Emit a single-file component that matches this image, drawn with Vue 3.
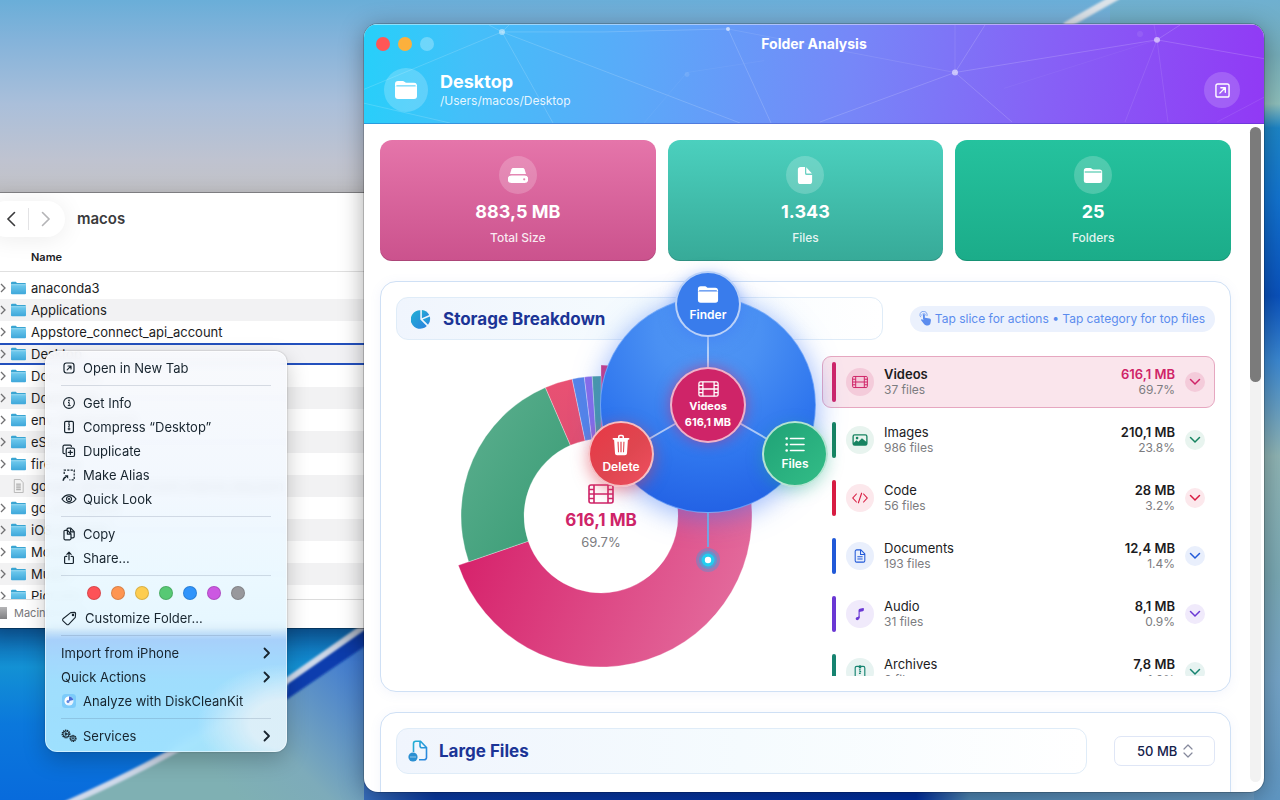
<script setup>
import { ref } from 'vue'

const folders = [
  { name: 'anaconda3' },
  { name: 'Applications' },
  { name: 'Appstore_connect_api_account' },
  { name: 'Desktop', selected: true },
  { name: 'Documents' },
  { name: 'Downloads' },
  { name: 'env_development' },
  { name: 'eSignatures' },
  { name: 'firebase' },
  { name: 'google_service_account_macos_key.json', file: true },
  { name: 'go_workspace' },
  { name: 'iOS_projects' },
  { name: 'Movies' },
  { name: 'Music' },
  { name: 'Pictures' },
]

const menuGroups = [
  [{ icon: 'tab', label: 'Open in New Tab' }],
  [
    { icon: 'info', label: 'Get Info' },
    { icon: 'zip', label: 'Compress “Desktop”' },
    { icon: 'duplicate', label: 'Duplicate' },
    { icon: 'alias', label: 'Make Alias' },
    { icon: 'eye', label: 'Quick Look' },
  ],
  [
    { icon: 'copy', label: 'Copy' },
    { icon: 'share', label: 'Share...' },
  ],
]
const tags = [
  { name: 'Red', cls: 'red' },
  { name: 'Orange', cls: 'orange' },
  { name: 'Yellow', cls: 'yellow' },
  { name: 'Green', cls: 'green' },
  { name: 'Blue', cls: 'blue' },
  { name: 'Purple', cls: 'purple' },
  { name: 'Gray', cls: 'gray' },
]

const stats = [
  { icon: 'drive', value: '883,5 MB', label: 'Total Size', cls: 'pink' },
  { icon: 'file', value: '1.343', label: 'Files', cls: 'teal' },
  { icon: 'folder', value: '25', label: 'Folders', cls: 'emerald' },
]

const categories = [
  { name: 'Videos', icon: 'film', files: '37 files', size: '616,1 MB', share: 69.7, cls: 'c-videos' },
  { name: 'Images', icon: 'image', files: '986 files', size: '210,1 MB', share: 23.8, cls: 'c-images' },
  { name: 'Code', icon: 'code', files: '56 files', size: '28 MB', share: 3.2, cls: 'c-code' },
  { name: 'Documents', icon: 'doc', files: '193 files', size: '12,4 MB', share: 1.4, cls: 'c-docs' },
  { name: 'Audio', icon: 'note', files: '31 files', size: '8,1 MB', share: 0.9, cls: 'c-audio' },
  { name: 'Archives', icon: 'archive', files: '6 files', size: '7,8 MB', share: 1.0, cls: 'c-archives' },
]
const active = ref('Videos')
const threshold = ref('50')

function slicePath(from, to, outer, inner) {
  const p = (pct, r) => {
    const a = (pct / 100) * Math.PI * 2
    return `${(160 + r * Math.sin(a)).toFixed(2)} ${(160 - r * Math.cos(a)).toFixed(2)}`
  }
  const large = to - from > 50 ? 1 : 0
  return `M${p(from, outer)}A${outer} ${outer} 0 ${large} 1 ${p(to, outer)}L${p(to, inner)}A${inner} ${inner} 0 ${large} 0 ${p(from, inner)}Z`
}
let start = 0
const slices = categories.map((c) => {
  const from = start
  start += c.share
  return { name: c.name, fill: `url(#g-${c.cls})`, d: slicePath(from, start, c.name === 'Videos' ? 151 : 140, 77) }
})
</script>

<template>
  <svg class="defs" aria-hidden="true">
    <symbol id="i-tab" viewBox="0 0 16 16"><g fill="none" stroke="currentColor" stroke-width="1.2" stroke-linecap="round" stroke-linejoin="round"><rect x="3" y="3" width="10" height="10" rx="2.4" /><path d="M6.2 9.8l3.600-3.600M7 6h3v3" /></g></symbol>
    <symbol id="i-open" viewBox="0 0 16 16"><g fill="none" stroke="currentColor" stroke-width="1.5" stroke-linecap="round" stroke-linejoin="round"><rect x="1" y="1" width="14" height="14" rx="2" /><path d="M5.2 10.8l5.4-5.4M6.2 5h4.8v4.8" /></g></symbol>
    <symbol id="i-info" viewBox="0 0 16 16"><circle cx="8" cy="8" r="5.4" fill="none" stroke="currentColor" stroke-width="1.1" /><circle cx="8" cy="5.5" r=".9" fill="currentColor" /><path d="M7 7.500h1.200v3M6.800 10.600h2.800" fill="none" stroke="currentColor" /></symbol>
    <symbol id="i-zip" viewBox="0 0 16 16"><g fill="none" stroke="currentColor" stroke-width="1.2"><rect x="3.6" y="2.4" width="8.8" height="11.2" rx="1.4" /><path d="M8 2.4v1.600M7.200 4.800h1.400M7.600 6.200h1.400M7.200 7.600h1.400" /><path d="M7.300 9h1.400v1.800H7.300z" stroke-width=".9" /></g></symbol>
    <symbol id="i-duplicate" viewBox="0 0 16 16"><g fill="none" stroke="currentColor" stroke-width="1.2" stroke-linecap="round"><rect x="5.2" y="5.2" width="8.3" height="8.3" rx="1.6" /><path d="M3.600 10.600H3.200a1.200 1.200 0 0 1-1.200-1.200V3.600a1.400 1.400 0 0 1 1.400-1.400h5.800a1.200 1.200 0 0 1 1.200 1.200M9.350 7.400v4M7.350 9.400h4" /></g></symbol>
    <symbol id="i-alias" viewBox="0 0 16 16"><g fill="none" stroke="currentColor" stroke-width="1.2"><path d="M3.200 7V3.200h10v9.600H8.400" stroke-dasharray="2.2 1.2" /><path d="M2.200 13.800c.2-2.200 1-3.400 2.800-3.800" stroke-width="1.5" /></g><path d="M3.600 8.200h3.600v3.600z" fill="currentColor" /></symbol>
    <symbol id="i-eye" viewBox="0 0 16 16"><path d="M1 8c2-2.800 4.300-4.100 7-4.100S13 5.200 15 8c-2 2.800-4.300 4.100-7 4.100S3 10.800 1 8z" fill="none" stroke="currentColor" stroke-width="1.2" /><circle cx="8" cy="8" r="2.5" fill="none" stroke="currentColor" stroke-width="1.2" /><circle cx="8" cy="8" r="1.1" fill="currentColor" /></symbol>
    <symbol id="i-copy" viewBox="0 0 16 16"><g fill="none" stroke="currentColor" stroke-width="1.2" stroke-linejoin="round"><path d="M6 4.300V3.400a1.200 1.200 0 0 1 1.200-1.200h2.600l3.400 3.400v5a1.200 1.200 0 0 1-1.200 1.200H10" /><path d="M3 5.500a1.200 1.200 0 0 1 1.200-1.200h2.300L10 8v4.600a1.200 1.200 0 0 1-1.200 1.200H4.200A1.200 1.200 0 0 1 3 12.600zM6.400 4.500V8.200H10M9.600 2.400v3.400h3.400" /></g></symbol>
    <symbol id="i-share" viewBox="0 0 16 16"><g fill="none" stroke="currentColor" stroke-width="1.2" stroke-linecap="round" stroke-linejoin="round"><path d="M5.800 6.300H4.600a1 1 0 0 0-1 1v5.200a1 1 0 0 0 1 1h6.800a1 1 0 0 0 1-1V7.300a1 1 0 0 0-1-1h-1.200M8 9.800V2.400M5.900 4.300L8 2.200l2.100 2.100" /></g></symbol>
    <symbol id="i-tag" viewBox="0 0 16 16"><g fill="none" stroke="currentColor" stroke-width="1.1" stroke-linejoin="round"><path d="M9.700 2.600l3.900-.2a1 1 0 0 1 1 1l-.3 3.900-6.600 7a1.400 1.400 0 0 1-2 0L2 10.800a1.400 1.400 0 0 1 0-2z" /><circle cx="12" cy="5" r=".7" /></g></symbol>
    <symbol id="i-gears" viewBox="0 0 16 16"><g fill="none" stroke="currentColor"><circle cx="5" cy="6" r="3.700" stroke-width="1.5" stroke-dasharray="1.3 .7" /><circle cx="5" cy="6" r="3" stroke-width=".8" /><circle cx="5" cy="6" r="1" /><path d="M5 6l-1.500-2.500M5 6l-1.500 2.500M5 6h3" stroke-width=".8" /><circle cx="12" cy="10.4" r="2.9" stroke-width="1.4" stroke-dasharray="1.1 .6" /><circle cx="12" cy="10.4" r="2.3" stroke-width=".8" /><circle cx="12" cy="10.4" r=".8" /></g></symbol>
    <symbol id="i-folder" viewBox="0 0 24 20"><path d="M1 4a3 3 0 0 1 3-3h4.200c1.200 0 1.800.4 2.500 1 .5.500 1 .7 1.800.7H20a3 3 0 0 1 3 2.300H1z" fill="currentColor" /><path d="M1 6.600h22V16a3 3 0 0 1-3 3H4a3 3 0 0 1-3-3z" fill="currentColor" /><path d="M1 5h1.600v1.700H1zM21.400 5H23v1.700h-1.600z" fill="currentColor" /><path d="M3 5h18v1.600H3z" fill="currentColor" opacity=".3" /></symbol>
    <symbol id="i-drive" viewBox="0 0 20 16"><path d="M5.500.5h9c1 0 1.700.5 2 1.300L18 6.500H2l1.500-4.700C3.800 1 4.500.5 5.500.5z" fill="currentColor" /><path fill-rule="evenodd" d="M3.500 8h13a3.500 3.500 0 0 1 0 7.500h-13a3.500 3.500 0 0 1 0-7.500zm12.700 2.700a1.100 1.100 0 1 0 0 2.200 1.100 1.100 0 0 0 0-2.200z" fill="currentColor" /></symbol>
    <symbol id="i-file" viewBox="0 0 16 20"><path d="M3.500 1H8v6.500a2 2 0 0 0 2 2h5.500V16a3 3 0 0 1-3 3h-9a3 3 0 0 1-3-3V4a3 3 0 0 1 3-3z" fill="currentColor" /><path d="M9.300 1.200L15.300 8H10.300a1 1 0 0 1-1-1z" fill="currentColor" /></symbol>
    <symbol id="i-film" viewBox="0 0 26 20"><g fill="none" stroke="currentColor" stroke-width="1.6"><rect x="1" y="1" width="24" height="18" rx="2" /><path d="M6 1v18M20 1v18M6 10h14M1 5.500h5M1 10h5M1 14.500h5M20 5.500h5M20 10h5M20 14.500h5" /></g></symbol>
    <symbol id="i-image" viewBox="0 0 18 14"><path fill-rule="evenodd" d="M3 .5h12A2.500 2.500 0 0 1 17.500 3v8a2.500 2.500 0 0 1-2.500 2.500H3A2.500 2.500 0 0 1 .5 11V3A2.500 2.500 0 0 1 3 .5zM3 2a1 1 0 0 0-1 1v7l3-2.800 2.200 1.800 4-4L16 9V3a1 1 0 0 0-1-1zm2.700 1.300a1.500 1.500 0 1 1 0 3 1.500 1.500 0 0 1 0-3z" fill="currentColor" /></symbol>
    <symbol id="i-code" viewBox="0 0 20 14"><path d="M5.500 2L1 7l4.500 5M14.500 2L19 7l-4.500 5M12 1L8 13" fill="none" stroke="currentColor" stroke-width="1.400" stroke-linecap="round" /></symbol>
    <symbol id="i-doc" viewBox="0 0 14 16"><g fill="none" stroke="currentColor" stroke-width="1.2" stroke-linejoin="round"><path d="M1.500 2.700A1.700 1.700 0 0 1 3.200 1H8l4.500 4.700v7.600a1.700 1.700 0 0 1-1.700 1.700H3.200a1.700 1.700 0 0 1-1.700-1.700zM7.600 1v5.200h4.900M4 8.800h6M4 11.500h6" /></g></symbol>
    <symbol id="i-note" viewBox="0 0 14 16"><path d="M6 4v8.200" stroke="currentColor" stroke-width="1.300" /><path d="M5.400 3.600c0-1 .5-1.500 1.400-1.700l3.700-.8c.6-.1.900.2.900.7v1.600c0 .8-.4 1.200-1.200 1.400l-4.200.9z" fill="currentColor" /><path d="M6.600 11.500c0 2.200-1.100 3.500-2.700 3.500-1.100 0-1.800-.7-1.800-1.600 0-1.200.9-1.700 2-1.900 1.100-.2 1.300-.4 1.300-1.300z" fill="currentColor" /></symbol>
    <symbol id="i-archive" viewBox="0 0 14 16"><g fill="none" stroke="currentColor" stroke-width="1.3"><rect x="1.500" y="1.500" width="11" height="13.500" rx="1.8" /><path d="M7 0v4M5.600 3h2.800M5.800 5.500h2M6.300 7.500h2M5.800 9.500h2" /></g></symbol>
    <symbol id="i-trash" viewBox="0 0 18 22"><path fill-rule="evenodd" d="M6 2.800C6 1.500 6.800.8 8 .8h2c1.200 0 2 .7 2 2V4h4.500c.6 0 .9.300.9.800s-.3.900-.9.900h-.6L15 19.300c-.1 1.200-.9 1.900-2.100 1.900H5.100c-1.200 0-2-.7-2.100-1.900L2.100 5.700h-.6c-.6 0-.9-.4-.9-.9S.9 4 1.500 4H6zm1.500 0V4h3V2.800c0-.4-.2-.6-.6-.6H8.100c-.4 0-.6.2-.6.600zM5.500 7.800l.5 10.500h1L6.600 7.800zM8.400 7.800v10.500h1.200V7.800zm3 0L11 18.300h1l.5-10.500z" fill="currentColor" /></symbol>
    <symbol id="i-list" viewBox="0 0 20 16"><g fill="currentColor"><circle cx="1.700" cy="2" r="1.300" /><circle cx="1.700" cy="8" r="1.300" /><circle cx="1.700" cy="14" r="1.300" /></g><path d="M5.500 2h13.500M5.500 8h13.500M5.500 14h13.500" stroke="currentColor" stroke-width="1.600" stroke-linecap="round" /></symbol>
    <symbol id="i-tap" viewBox="0 0 14 16"><path d="M4.300 8V4.200a1 1 0 0 1 2 0v3l5 .9c1.200.3 1.700 1 1.500 2.200l-.5 2.900c-.3 1.500-1.200 2.300-2.800 2.300H8c-1 0-1.800-.4-2.400-1.200L2.300 10c-.4-.7.3-1.600 1.100-1.100l1.400 1z" fill="currentColor" /><path d="M1.900 6.600a3.900 3.900 0 1 1 6.700-1.200" fill="none" stroke="currentColor" stroke-width=".8" /><path d="M3.200 5.500a2.200 2.200 0 1 1 4.200-.6" fill="none" stroke="currentColor" stroke-width=".6" /></symbol>
    <linearGradient id="g-accent" x1="0" y1="0" x2="1" y2="1"><stop offset="0" stop-color="#22b0d4" /><stop offset="1" stop-color="#2a82de" /></linearGradient>
    <linearGradient id="g-folder" x1="0" y1="0" x2="0" y2="1"><stop offset="0" stop-color="#71cbee" /><stop offset="1" stop-color="#3ea7da" /></linearGradient>
  </svg>

  <main class="desktop">
    <svg class="wallpaper" viewBox="0 0 1280 800" preserveAspectRatio="none" aria-hidden="true">
      <defs>
        <linearGradient id="sky" x1="0" y1="0" x2="0" y2="1">
          <stop offset="0" stop-color="#6aaed8" /><stop offset=".05" stop-color="#84b3da" /><stop offset=".13" stop-color="#aabfda" /><stop offset=".2" stop-color="#bfc3d0" /><stop offset=".25" stop-color="#c3c2c4" />
        </linearGradient>
        <linearGradient id="deep" x1="0" y1="0" x2="0" y2="1">
          <stop offset="0" stop-color="#0b4f9e" /><stop offset=".3" stop-color="#1391d4" /><stop offset=".6" stop-color="#0b78dc" /><stop offset="1" stop-color="#086bdc" />
        </linearGradient>
        <linearGradient id="sand" gradientUnits="userSpaceOnUse" x1="240" y1="800" x2="370" y2="670">
          <stop offset="0" stop-color="#7fb0b3" /><stop offset=".35" stop-color="#7dabba" /><stop offset="1" stop-color="#3f7ad2" />
        </linearGradient>
        <linearGradient id="side" x1="0" y1="0" x2="0" y2="1">
          <stop offset="0" stop-color="#6fb0d0" /><stop offset=".07" stop-color="#76adb9" /><stop offset=".13" stop-color="#8fc0bc" /><stop offset=".16" stop-color="#1d86c8" /><stop offset=".25" stop-color="#1273d0" /><stop offset=".37" stop-color="#0a52bd" /><stop offset=".45" stop-color="#3b88d2" /><stop offset=".57" stop-color="#90b5b5" /><stop offset=".72" stop-color="#7aa9b4" /><stop offset=".85" stop-color="#75a5c8" /><stop offset="1" stop-color="#5f96c2" />
        </linearGradient>
        <linearGradient id="foot" x1="0" y1="0" x2="1" y2="0">
          <stop offset="0" stop-color="#386ebd" /><stop offset=".08" stop-color="#0a3ba6" /><stop offset=".62" stop-color="#002fa3" /><stop offset=".68" stop-color="#5089b7" /><stop offset="1" stop-color="#6c9dc5" />
        </linearGradient>
        <filter id="soft"><feGaussianBlur stdDeviation="1" /></filter>
      </defs>
      <rect width="1280" height="800" fill="url(#sky)" />
      <rect y="610" width="400" height="190" fill="url(#deep)" />
      <path d="M400 604L288 680Q200 744 60 806H400z" fill="url(#sand)" />
      <path d="M374 622L288 682 286 700 374 640z" fill="#0a3cae" filter="url(#soft)" />
      <path d="M372 621L288 680Q200 744 66 804" fill="none" stroke="#cfd9ea" stroke-width="6" filter="url(#soft)" />
      <rect x="1110" width="170" height="800" fill="url(#side)" />
      <path d="M1065 26L1118-4" stroke="#dde4ea" stroke-width="7" filter="url(#soft)" />
      <rect x="364" y="780" width="890" height="20" fill="url(#foot)" />
    </svg>

    <section class="finder" aria-label="Finder">
      <header class="finder-bar">
        <nav class="nav-pill">
          <button aria-label="Back"><svg viewBox="0 0 10 16"><path d="M8.500 1.500L2 8l6.500 6.500" /></svg></button>
          <i></i>
          <button class="dim" aria-label="Forward"><svg viewBox="0 0 10 16"><path d="M1.500 1.500L8 8l-6.500 6.500" /></svg></button>
        </nav>
        <h2>macos</h2>
      </header>
      <div class="finder-col">Name</div>
      <ul class="finder-list">
        <li v-for="f in folders" :key="f.name" :class="{ selected: f.selected }">
          <svg v-if="!f.file" class="disclose" viewBox="0 0 6 10"><path d="M1 1l4 4-4 4" /></svg>
          <span v-else class="disclose"></span>
          <svg v-if="!f.file" class="folder-icon" viewBox="0 0 15 13"><path d="M0 1.500Q0 .3 1.200.3h3.600l1.200 1.100h7.800q1.200 0 1.200 1V6H0z" fill="#3aa5d2" /><path d="M0 3h15v8.700q0 1-1 1H1q-1 0-1-1z" fill="url(#g-folder)" /><path d="M0 3.200h15" stroke="#b4e6f8" stroke-width=".7" /></svg>
          <svg v-else class="folder-icon" viewBox="0 0 15 15"><path d="M3 .5h6.500L12.500 4v10.500H3z" fill="#f3f3f3" stroke="#b5b5b5" /><path d="M5 5.500h5M5 7.500h5M5 9.500h5M5 11.500h5" stroke="#999" /></svg>
          <span>{{ f.name }}</span>
        </li>
      </ul>
      <footer class="finder-foot"><i></i>Macintosh HD</footer>
    </section>

    <section class="app" aria-label="Folder Analysis">
      <header class="app-head">
        <svg class="mesh" viewBox="0 0 900 99" preserveAspectRatio="none" aria-hidden="true">
          <g fill="none" stroke="#fff" stroke-width="1" opacity=".16">
            <path d="M0 65L138 7 189 99M138 7L376 99M138 7H240L364 4M364 4L407 99M0 79L86 99M125 0L138 7 145 0" />
            <path d="M456 98L591 48 648 98M591 48L621 0M591 48L793 15 900 34M793 15L816 0" />
            <path d="M591 48V0M591 48L364 4M793 15L761 98M793 15L804 98M853 98L900 73M790 0L793 15" opacity=".6" />
            <path d="M280 99L323 48 400 36M640 64L793 15" opacity=".3" />
          </g>
          <g fill="#fff"><circle cx="138" cy="7" r="3" opacity=".45" /><circle cx="364" cy="4" r="2" opacity=".6" /><circle cx="591" cy="48" r="3" opacity=".55" /><circle cx="793" cy="15" r="3" opacity=".55" /><circle cx="323" cy="50" r="2.500" opacity=".1" /><circle cx="776" cy="9" r="3" opacity=".08" /></g>
        </svg>
        <div class="title-bar">
          <div class="lights"><button class="close" aria-label="Close"></button><button class="mini" aria-label="Minimize"></button><button class="zoom" aria-label="Zoom"></button></div>
          <h1>Folder Analysis</h1>
          <span></span>
        </div>
        <div class="folder-row">
          <span class="folder-badge"><svg width="24" height="20"><use href="#i-folder" /></svg></span>
          <div class="folder-text"><strong>Desktop</strong><span>/Users/macos/Desktop</span></div>
          <button class="open-btn" aria-label="Open in Finder"><svg width="15" height="15"><use href="#i-open" /></svg></button>
        </div>
      </header>

      <div class="app-body">
        <div class="content">
          <div class="stats">
            <article v-for="s in stats" :key="s.label" class="stat" :class="s.cls">
              <span class="stat-icon"><svg width="20" height="19"><use :href="'#i-' + s.icon" /></svg></span>
              <strong>{{ s.value }}</strong>
              <span class="stat-label">{{ s.label }}</span>
            </article>
          </div>

          <section class="panel">
            <div class="panel-head">
              <div class="head-box">
                <svg class="pie" viewBox="0 0 20 20" fill="url(#g-accent)"><path d="M9.300 1.200v9.200l6.500 6.500A9.300 9.300 0 1 1 9.300 1.200z" /><path d="M10.900.9a9.300 9.300 0 0 1 7.300 5l-7.300 3.300z" /><path d="M18.800 7.400a9.300 9.300 0 0 1-1.800 8.300l-5.300-5.200z" /></svg>
                <h2>Storage Breakdown</h2>
              </div>
              <p class="hint"><svg width="13" height="15"><use href="#i-tap" /></svg>Tap slice for actions • Tap category for top files</p>
            </div>
            <div class="split">
              <div class="chart">
                <svg class="donut" viewBox="0 0 320 320" role="img" aria-label="Storage by category">
                  <defs>
                    <linearGradient id="g-c-videos" gradientUnits="userSpaceOnUse" x1="30" y1="150" x2="290" y2="250"><stop offset="0" stop-color="#d6206a" /><stop offset="1" stop-color="#e3699b" /></linearGradient>
                    <linearGradient id="g-c-images" x1="0" y1="0" x2="1" y2="1"><stop offset="0" stop-color="#5eb090" /><stop offset="1" stop-color="#369a73" /></linearGradient>
                    <linearGradient id="g-c-code" x1="0" y1="0" x2="0" y2="1"><stop offset="0" stop-color="#e95173" /><stop offset="1" stop-color="#df4f72" /></linearGradient>
                    <linearGradient id="g-c-docs"><stop stop-color="#5584e8" /></linearGradient>
                    <linearGradient id="g-c-audio"><stop stop-color="#8a6ce8" /></linearGradient>
                    <linearGradient id="g-c-archives"><stop stop-color="#4b9ba0" /></linearGradient>
                  </defs>
                  <path v-for="s in slices" :key="s.name" :d="s.d" :fill="s.fill" stroke="#fff" stroke-opacity=".3" stroke-width="1" />
                </svg>
                <div class="donut-label">
                  <svg width="26" height="20"><use href="#i-film" /></svg>
                  <strong>616,1 MB</strong>
                  <span>69.7%</span>
                </div>
                <div class="radial">
                  <div class="disc"></div>
                  <svg class="spokes" viewBox="0 0 216 312" aria-hidden="true">
                    <path d="M108 108V8M108 108L21 158M108 108l87 50" stroke="#fff" stroke-opacity=".6" stroke-width="2" />
                    <path d="M108 216v34" stroke="#75a3e2" stroke-width="2" />
                    <circle cx="108" cy="263" r="12" fill="#25a3e8" opacity=".35" /><circle cx="108" cy="263" r="9" fill="#25b3e8" opacity=".5" /><circle cx="108" cy="263" r="6.500" fill="#22cdef" /><circle cx="108" cy="263" r="3.200" fill="#fff" />
                  </svg>
                  <button class="node hub"><svg width="21" height="16"><use href="#i-film" /></svg><b>Videos</b><b>616,1 MB</b></button>
                  <button class="node sat n-finder"><svg width="22" height="19"><use href="#i-folder" /></svg>Finder</button>
                  <button class="node sat n-delete"><svg width="18" height="22"><use href="#i-trash" /></svg>Delete</button>
                  <button class="node sat n-files"><svg width="20" height="17"><use href="#i-list" /></svg>Files</button>
                </div>
              </div>
              <ul class="cats">
                <li v-for="c in categories" :key="c.name" :class="[c.cls, { on: active === c.name }]">
                  <button class="cat" @click="active = c.name">
                    <i class="bar"></i>
                    <span class="cat-icon"><svg width="16" height="14"><use :href="'#i-' + c.icon" /></svg></span>
                    <span class="cat-text"><b>{{ c.name }}</b><small>{{ c.files }}</small></span>
                    <span class="cat-size"><b>{{ c.size }}</b><small>{{ c.share.toFixed(1) }}%</small></span>
                    <span class="chev"><svg viewBox="0 0 12 8"><path d="M1.500 1.500L6 6l4.500-4.500" /></svg></span>
                  </button>
                </li>
              </ul>
            </div>
          </section>

          <section class="panel second">
            <div class="panel-head">
              <div class="head-box tall">
                <svg class="big-file" viewBox="0 0 20 22"><path d="M5.500 12V3.500A2.300 2.300 0 0 1 7.800 1.200h4.700l6 6.300v10a2.300 2.300 0 0 1-2.300 2.300H11M12 1.200v4.600A2 2 0 0 0 14 7.800h4.500" fill="none" stroke="url(#g-accent)" stroke-width="1.6" /><circle cx="5" cy="17" r="4.6" fill="#2a8fd2" /><path d="M2.500 17h1M4.500 17h1M6.500 17h1" stroke="#fff" stroke-width="1.2" /></svg>
                <h2>Large Files</h2>
              </div>
              <div class="pick">
                <select v-model="threshold" aria-label="Minimum file size"><option value="50">50 MB</option></select>
                <svg viewBox="0 0 10 14"><path d="M1 5L5 1 9 5M1 9L5 13 9 9" /></svg>
              </div>
            </div>
          </section>
        </div>
        <div class="scroll"><i></i></div>
      </div>
    </section>

    <div class="menu" role="menu">
      <template v-for="(group, gi) in menuGroups" :key="gi">
        <button v-for="m in group" :key="m.label" role="menuitem"><svg width="16" height="16"><use :href="'#i-' + m.icon" /></svg>{{ m.label }}</button>
        <hr />
      </template>
      <div class="tags"><button v-for="t in tags" :key="t.name" :class="t.cls" :aria-label="t.name"></button></div>
      <button role="menuitem" class="wide"><svg width="16" height="16"><use href="#i-tag" /></svg>Customize Folder...</button>
      <hr />
      <button role="menuitem"><span class="grow">Import from iPhone</span><svg class="more" viewBox="0 0 8 12"><path d="M1.500 1.500L6 6l-4.500 4.500" /></svg></button>
      <button role="menuitem"><span class="grow">Quick Actions</span><svg class="more" viewBox="0 0 8 12"><path d="M1.500 1.500L6 6l-4.500 4.500" /></svg></button>
      <button role="menuitem"><svg width="16" height="16" viewBox="0 0 16 16"><rect x="1" y="1" width="14" height="14" rx="3.500" fill="#7ccbfa" /><circle cx="8" cy="8" r="4.500" fill="#e9f3ff" /><path d="M8 3.500a4.500 4.500 0 0 0-3 7.800L8 8z" fill="#fff" /><path d="M8 8V3.500A4.500 4.500 0 0 1 12.300 7z" fill="#4a6ed8" /><circle cx="7" cy="8.500" r="1.500" fill="#5f86e0" /></svg>Analyze with DiskCleanKit</button>
      <hr />
      <button role="menuitem"><svg width="16" height="16"><use href="#i-gears" /></svg><span class="grow">Services</span><svg class="more" viewBox="0 0 8 12"><path d="M1.500 1.500L6 6l-4.500 4.500" /></svg></button>
    </div>
  </main>
</template>

<style>
html, body { height: 100%; overflow: hidden; }
</style>

<style scoped>
.defs { position: absolute; width: 0; height: 0; }
.desktop { position: relative; height: 100vh; overflow: hidden; font-family: Inter, "Liberation Sans", sans-serif; font-size: 13px; color: #1c1c1e; }
.wallpaper { position: absolute; inset: 0; width: 100%; height: 100%; }
h1, h2, p, ul { margin: 0; padding: 0; }
ul { list-style: none; }
button { font: inherit; color: inherit; border: 0; background: none; padding: 0; margin: 0; }
svg { flex: none; }

.finder { position: absolute; left: -12px; top: 193px; width: 460px; height: 435px; background: #fff; display: flex; flex-direction: column; overflow: hidden; box-shadow: 0 0 0 1px rgba(0, 0, 0, .3), 0 8px 22px rgba(0, 0, 0, .3); }
.finder-bar { height: 51px; display: flex; align-items: center; gap: 12px; }
.finder-bar h2 { font-size: 15px; line-height: 20px; font-weight: 600; color: #3a3a3c; }
.nav-pill { display: flex; align-items: center; justify-content: flex-end; box-sizing: border-box; width: 77px; height: 36px; padding-right: 2px; border-radius: 18px; background: #fff; box-shadow: 0 2px 24px rgba(0, 0, 0, .08); }
.nav-pill button { width: 34px; height: 28px; display: flex; align-items: center; justify-content: center; }
.nav-pill svg { width: 10px; height: 16px; fill: none; stroke: #3a3a3c; stroke-width: 1.6; stroke-linecap: round; }
.nav-pill .dim svg { stroke: #b4b4b6; }
.nav-pill i { width: 1px; height: 22px; background: #e3e3e5; }
.finder-col { height: 27px; padding-left: 43px; font-size: 11px; line-height: 27px; font-weight: 600; border-bottom: 1px solid #e0e0e0; }
.finder-list { flex: 1; min-height: 0; padding-top: 5px; overflow: hidden; }
.finder-list li { height: 22px; display: flex; align-items: center; padding-left: 12px; white-space: nowrap; }
.finder-list li:nth-child(even) { background: #f2f2f3; }
.finder-list li.selected { box-shadow: inset 0 0 0 2px #2350bd; background: #f2f2f5; border-radius: 3px; }
.disclose { width: 6px; height: 10px; margin-right: 5px; fill: none; stroke: #707072; stroke-width: 1.3; }
.folder-icon { width: 15px; height: 14px; margin-right: 5px; }
.finder-foot { height: 25px; padding-bottom: 3px; border-top: 1px solid #dcdcdc; display: flex; align-items: center; gap: 7px; padding-left: 12px; font-size: 11px; color: #77777a; }
.finder-foot i { width: 7px; height: 12px; background: linear-gradient(#b5b5b7, #808082); }

.menu { position: absolute; left: 45px; top: 351px; width: 242px; padding: 5px 0 4px; box-sizing: border-box; border-radius: 12px; color: #17242e; background: radial-gradient(ellipse 90px 60px at 100% 93%, rgba(226, 240, 248, .9) 40%, rgba(226, 240, 248, 0)), linear-gradient(rgba(248, 249, 252, .93) 0, rgba(241, 247, 254, .93) 36%, rgba(233, 248, 255, .93) 57%, rgba(228, 246, 255, .93) 69%, rgba(176, 214, 255, .95) 72%, rgba(168, 226, 255, .95) 82%, rgba(166, 230, 255, .95) 100%); backdrop-filter: blur(5px); box-shadow: inset 0 0 0 1px rgba(255, 255, 255, .5), 0 0 2px rgba(0, 0, 0, .3), 0 8px 22px rgba(0, 0, 0, .22); }
.menu > button { width: 100%; height: 24px; padding: 0 16px; display: flex; align-items: center; gap: 6px; text-align: left; white-space: nowrap; }
.menu > .wide { gap: 8px; }
.menu hr { margin: 5px 16px; border: 0; height: 1px; background: rgba(60, 80, 110, .18); }
.grow { flex: 1; }
.more { width: 8px; height: 12px; fill: none; stroke: currentColor; stroke-width: 1.8; stroke-linecap: round; stroke-linejoin: round; }
.tags { height: 25px; box-sizing: border-box; display: flex; align-items: center; gap: 10px; padding: 0 0 2px 42px; }
.tags button { width: 14px; height: 14px; border-radius: 50%; box-sizing: border-box; border: 1px solid rgba(0, 0, 0, .14); }
.red { background: #fd5257; }
.orange { background: #fe9551; }
.yellow { background: #fdcd50; }
.green { background: #57c974; }
.blue { background: #3094fb; }
.purple { background: #cc58e2; }
.gray { background: #98989c; }

.app { position: absolute; left: 364px; right: 16px; top: 24px; bottom: 8px; border-radius: 14px; overflow: hidden; background: #fff; display: flex; flex-direction: column; box-shadow: 0 0 0 1px rgba(0, 0, 0, .18), 0 4px 24px rgba(0, 0, 0, .35); }
.app-head { position: relative; box-sizing: border-box; height: 100px; flex: none; color: #fff; background: linear-gradient(97deg, #26d0fa 0, #44bff9 12%, #5aaaf9 30%, #7687f8 54%, #8662f6 75%, #9139f5 100%); border-top: 1px solid rgba(255, 255, 255, .45); border-bottom: 1px solid rgba(40, 40, 160, .3); }
.mesh { position: absolute; inset: 0; width: 100%; height: 100%; }
.title-bar { position: relative; height: 38px; display: grid; grid-template-columns: 1fr auto 1fr; align-items: center; padding: 0 12px; }
.title-bar h1 { font-size: 14px; line-height: 20px; font-weight: 700; }
.lights { display: flex; gap: 8px; }
.lights button { width: 14px; height: 14px; border-radius: 50%; }
.close { background: #ff5656; }
.mini { background: #fcb03c; }
.zoom { background: rgba(255, 255, 255, .28); }
.folder-row { position: relative; display: flex; align-items: center; gap: 12px; padding: 5px 24px 0 20px; }
.folder-badge { width: 44px; height: 44px; border-radius: 50%; background: rgba(255, 255, 255, .2); display: flex; align-items: center; justify-content: center; }
.folder-text { flex: 1; display: flex; flex-direction: column; }
.folder-text strong { font-size: 18px; line-height: 22px; font-weight: 700; }
.folder-text span { font-size: 12px; line-height: 16px; color: rgba(255, 255, 255, .88); }
.open-btn { width: 36px; height: 36px; border-radius: 50%; background: rgba(255, 255, 255, .17); display: flex; align-items: center; justify-content: center; }

.app-body { flex: 1; min-height: 0; display: flex; }
.content { flex: 1; min-width: 0; padding: 16px 16px 0; display: flex; flex-direction: column; gap: 20px; overflow: hidden; }
.scroll { width: 17px; flex: none; padding: 3px 3px 10px; box-sizing: border-box; display: flex; justify-content: center; }
.scroll i { width: 11px; border-radius: 6px; background: #f2f2f2; }
.scroll i::before { content: ""; display: block; height: 39%; border-radius: 6px; background: #7b7b7b; }

.stats { display: grid; grid-template-columns: repeat(3, 1fr); gap: 12px; flex: none; }
.stat { display: flex; flex-direction: column; align-items: center; padding: 16px 0 15px; border-radius: 12px; color: #fff; box-shadow: inset 0 -1px 0 rgba(0, 0, 0, .15); }
.stat-icon { width: 38px; height: 38px; border-radius: 50%; background: rgba(255, 255, 255, .2); display: flex; align-items: center; justify-content: center; }
.stat strong { margin-top: 7px; font-size: 18px; line-height: 22px; font-weight: 700; }
.stat-label { margin-top: 7px; font-size: 12px; line-height: 16px; font-weight: 500; color: rgba(255, 255, 255, .88); }
.pink { background: linear-gradient(#e575aa, #cb528d); }
.teal { background: linear-gradient(#4bd0be, #37aa98); }
.emerald { background: linear-gradient(#25c29e, #1bac89); }

.panel { flex: none; box-sizing: border-box; padding: 15px; border: 1px solid #cfe0f5; border-radius: 16px; background: #fff; box-shadow: 0 2px 12px rgba(100, 130, 220, .08); }
.second { height: 420px; }
.panel-head { display: flex; align-items: center; gap: 27px; }
.head-box { flex: 1; box-sizing: border-box; height: 43px; display: flex; align-items: center; padding-left: 14px; gap: 12px; border: 1px solid #dfecf8; border-radius: 12px; background: linear-gradient(90deg, #f0f5fd, #f5fbfe 50%, #fff); }
.head-box.tall { height: 46px; padding-left: 11px; gap: 11px; }
.head-box h2 { font-size: 17px; line-height: 24px; font-weight: 700; color: #1b3496; }
.pie { width: 20px; height: 20px; }
.big-file { width: 20px; height: 22px; }
.hint { display: flex; align-items: center; gap: 3px; padding: 0 10px 0 9px; height: 26px; border-radius: 13px; background: #ebf1fd; font-size: 12px; color: #5b8cee; white-space: nowrap; }
.split { display: grid; grid-template-columns: 410fr 393fr; gap: 16px; height: 319px; margin: 16px 0 1px; }
.chart { position: relative; display: flex; justify-content: center; }
.donut { width: 320px; height: 320px; }
.donut-label { position: absolute; inset: 0; padding-top: 128px; display: flex; flex-direction: column; align-items: center; color: #cf2468; }
.donut-label strong { margin-top: 5px; font-size: 17px; line-height: 22px; font-weight: 700; }
.donut-label span { margin-top: 3px; font-size: 13px; line-height: 16px; color: #7c7c80; }

.radial { position: absolute; z-index: 2; left: calc(50% - 1px); top: -59px; width: 216px; height: 216px; }
.disc { position: absolute; inset: 0; border-radius: 50%; box-sizing: border-box; border: 1px solid rgba(150, 190, 255, .6); background: radial-gradient(circle at 50% 15%, #5096f4 0, #4a90f3 25%, #2f76ee 60%, #1d58e0 100%); box-shadow: 0 4px 28px rgba(59, 117, 246, .55); }
.spokes { position: absolute; left: 0; top: 0; width: 216px; height: 312px; }
.node { position: absolute; box-sizing: border-box; border-radius: 50%; color: #fff; display: flex; flex-direction: column; align-items: center; justify-content: center; border: 2px solid rgba(255, 255, 255, .65); background-clip: border-box; }
.hub { left: 70px; top: 70px; width: 76px; height: 76px; background: #cf2468; box-shadow: 0 0 14px rgba(214, 36, 108, .55); font-size: 11px; line-height: 16px; }
.hub svg { margin-bottom: 1px; }
.hub b { font-weight: 700; }
.sat { width: 66px; height: 66px; font-size: 12px; line-height: 16px; font-weight: 600; gap: 3px; }
.n-finder { left: 75px; top: -26px; background: #397cec; box-shadow: 0 4px 16px rgba(59, 117, 246, .5); }
.n-delete { left: -12px; top: 124px; background: linear-gradient(135deg, #e83845, #df4650 55%, #f05060); box-shadow: 0 4px 16px rgba(236, 60, 70, .5); }
.n-files { left: 162px; top: 124px; background: linear-gradient(135deg, #1fa276, #33bd87); box-shadow: 0 4px 16px rgba(35, 175, 125, .35); }

.cats { overflow: hidden; display: flex; flex-direction: column; gap: 6px; }
.cats li { flex: none; }
.cat { width: 100%; height: 52px; box-sizing: border-box; display: flex; align-items: center; gap: 10px; padding: 0 9px; border: 1px solid transparent; border-radius: 9px; text-align: left; color: #1c1c1e; }
.bar { width: 4px; height: 36px; border-radius: 2px; background: var(--c); }
.cat-icon { width: 28px; height: 28px; border-radius: 50%; display: flex; align-items: center; justify-content: center; color: var(--c); background: var(--t); }
.cat-text { flex: 1; display: flex; flex-direction: column; }
.cat-size { display: flex; flex-direction: column; align-items: flex-end; }
.cat b { font-size: 13px; line-height: 16px; font-weight: 400; }
.cat small { font-size: 12px; line-height: 16px; color: #7c7c80; }
.cat .cat-size b { font-weight: 600; font-size: 12px; }
.cat .cat-size b { font-size: 13px; }
.chev { width: 20px; height: 20px; border-radius: 50%; display: flex; align-items: center; justify-content: center; background: var(--t); }
.chev svg { width: 12px; height: 8px; fill: none; stroke: var(--c); stroke-width: 1.5; stroke-linecap: round; }
.on .cat { background: #fae5ec; border-color: #e6a7c0; }
.on .bar { height: 40px; }
.on .cat b { font-weight: 600; }
.on .cat-size b { color: #cf2468; }
.c-videos { --c: #cf2468; --t: #f4cbda; }
.c-images { --c: #168360; --t: #e8f4ef; }
.c-code { --c: #d81c42; --t: #fce8ec; }
.c-docs { --c: #2159d8; --t: #e9effc; }
.c-audio { --c: #6a37d4; --t: #f0eafb; }
.c-archives { --c: #168370; --t: #e7f3f1; }

.pick { position: relative; width: 101px; height: 30px; }
.pick select { appearance: none; box-sizing: border-box; width: 100%; height: 100%; padding: 0 0 0 22px; border: 1px solid #dfe6f6; border-radius: 7px; background: #fff; font: 500 13px Inter, sans-serif; color: #15214b; }
.pick svg { position: absolute; right: 22px; top: 8px; width: 10px; height: 14px; fill: none; stroke: #85899c; stroke-width: 1.2; stroke-linecap: round; stroke-linejoin: round; }
</style>
